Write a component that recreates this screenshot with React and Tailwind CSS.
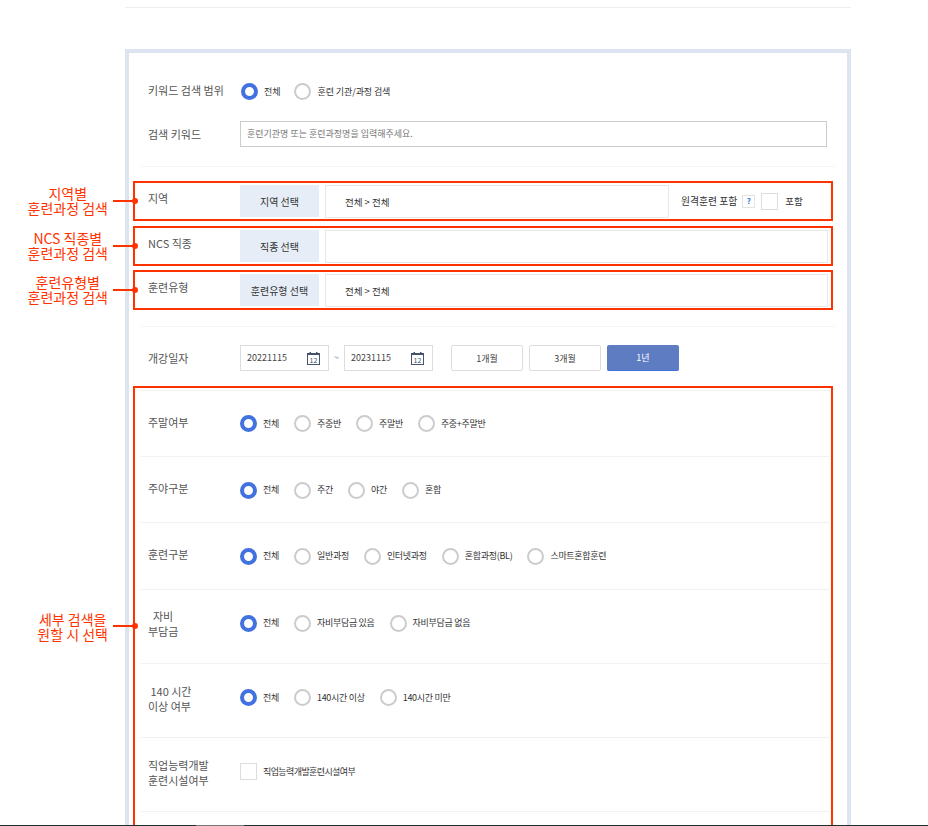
import React from 'react'

const Radio = ({ checked }) => (
  <span className={checked
    ? 'block w-[17px] h-[17px] shrink-0 rounded-full border-4 border-[#4272e0] bg-white'
    : 'block w-[17px] h-[17px] shrink-0 rounded-full border-2 border-[#cccccc] bg-white'} />
)

const RadioGroup = ({ items, className }) => (
  <div className={'flex items-center gap-[15px] ' + (className || '')}>
    {items.map((item, i) => (
      <div key={item} className="flex items-center gap-[6px]">
        <Radio checked={i === 0} />
        <span className="text-[9px] tracking-[-0.3px] text-[#333333] whitespace-nowrap">{item}</span>
      </div>
    ))}
  </div>
)

const CalendarIcon = () => (
  <svg width="13" height="13" viewBox="0 0 13 13" className="shrink-0">
    <rect x="0.5" y="1.5" width="12" height="11" fill="none" stroke="#44546a" />
    <rect x="0" y="1" width="13" height="2" fill="#44546a" />
    <rect x="2.5" y="0" width="1.5" height="2" fill="#44546a" />
    <rect x="9" y="0" width="1.5" height="2" fill="#44546a" />
    <text x="6.5" y="10.5" textAnchor="middle" fontSize="7" fill="#44546a">12</text>
  </svg>
)

const DateBox = ({ value }) => (
  <div className="flex items-center justify-between w-[89px] h-[26px] border border-[#dddddd] pl-[6px] pr-2 text-[9px] text-[#444444]">
    {value}
    <CalendarIcon />
  </div>
)

const Callout = ({ lines, className, textClass }) => (
  <div className={'absolute right-full flex items-center ' + className}>
    <div className={'text-[14px] leading-[15px] text-[#ff3300] text-center whitespace-nowrap mr-[5px] ' + (textClass || '')}>
      {lines.map((l) => <div key={l}>{l}</div>)}
    </div>
    <div className="relative w-[22px] h-[2px] bg-[#ff3300]">
      <span className="absolute right-[-3px] top-[-2px] w-[6px] h-[6px] rounded-full bg-[#ff3300]" />
    </div>
  </div>
)

const PickRow = ({ label, button, value, lines, wide, className, children }) => (
  <div className={'relative flex items-center h-10 ml-1 mr-[14px] border-2 border-[#ff3300] ' + className}>
    <div className="w-[105px] shrink-0 pl-[13px] -mt-[5px] text-[11px] text-[#555555]">{label}</div>
    <div className="flex items-center justify-center w-[79px] h-[32px] pt-px shrink-0 bg-[#e6edf7] text-[10px] text-[#333333]">{button}</div>
    <div className={'flex items-center h-[33px] ml-[6px] pl-[19px] pt-[3px] border border-[#e8e8e8] text-[9.5px] text-[#333333] ' + (wide ? 'w-[503px]' : 'w-[344px]')}>{value}</div>
    {children}
    <Callout lines={lines} className="top-1/2 -translate-y-1/2" />
  </div>
)

const DetailRow = ({ label, height, labelClass, children }) => (
  <div className={'flex items-center ml-[6px] mr-[2px] pl-[7px] border-b border-[#f2f2f2] ' + height}>
    <div className={'w-[92px] shrink-0 text-[11px] leading-[15.5px] text-[#555555] whitespace-pre ' + labelClass}>{label}</div>
    {children}
  </div>
)

const App = () => {
  return (
    <div className="relative h-[826px] overflow-hidden bg-white font-['Noto_Sans_CJK_KR','Noto_Sans',sans-serif]">
      <div className="w-[726px] ml-[125px]">
        <div className="h-2 border-b border-[#eeeeee]" />
        <div className="mt-[41px] border-4 border-[#dde3ef] pb-10">
          <div className="flex items-center h-[17px] mt-[30px] ml-3 pl-[7px]">
            <div className="w-[93px] text-[11px] text-[#555555] -mt-[3px]">키워드 검색 범위</div>
            <div className="flex items-center gap-[13px]">
              <div className="flex items-center gap-[6px]">
                <Radio checked />
                <span className="text-[9px] text-[#333333] pt-px">전체</span>
              </div>
              <div className="flex items-center gap-[7px]">
                <Radio />
                <span className="text-[9px] tracking-[-0.1px] text-[#333333] pt-px">훈련 기관/과정 검색</span>
              </div>
            </div>
          </div>
          <div className="flex items-center mt-[21px] ml-3 pl-[7px]">
            <div className="w-[92px] text-[11px] text-[#555555]">검색 키워드</div>
            <div className="flex items-center w-[587px] h-[26px] pl-[6px] border border-[#cccccc] text-[9px] text-[#777777]">
              훈련기관명 또는 훈련과정명을 입력해주세요.
            </div>
          </div>
          <div className="h-px mx-3 mt-[19px] bg-[#f4f4f4]" />

          <PickRow label="지역" button="지역 선택" value="전체 > 전체" lines={['지역별', '훈련과정 검색']} className="mt-[14px]">
            <span className="ml-3 text-[9.8px] text-[#333333] whitespace-nowrap">원격훈련 포함</span>
            <span className="flex items-center justify-center w-[13px] h-[13px] ml-[5px] border border-[#e3e3e3] text-[8px] font-bold text-[#4272e0]">?</span>
            <span className="block w-[17px] h-[17px] ml-[6px] border border-[#dddddd]" />
            <span className="ml-[7px] text-[9.5px] text-[#333333]">포함</span>
          </PickRow>
          <PickRow label="NCS 직종" button="직종 선택" value="" wide lines={['NCS 직종별', '훈련과정 검색']} className="mt-[5px]" />
          <PickRow label="훈련유형" button="훈련유형 선택" value="전체 > 전체" wide lines={['훈련유형별', '훈련과정 검색']} className="mt-1" />

          <div className="h-px mx-3 mt-4 bg-[#f4f4f4]" />
          <div className="flex items-center mt-[18px] ml-3 pl-[7px]">
            <div className="w-[92px] text-[11px] text-[#555555]">개강일자</div>
            <DateBox value="20221115" />
            <span className="w-[15px] text-center text-[9px] text-[#777777]">~</span>
            <DateBox value="20231115" />
            <div className="flex items-center gap-[6px] ml-[18px] text-[9px]">
              <div className="flex items-center justify-center w-[72px] h-[26px] pt-px rounded-[2px] border border-[#dddddd] text-[#444444]">1개월</div>
              <div className="flex items-center justify-center w-[72px] h-[26px] pt-px rounded-[2px] border border-[#dddddd] text-[#444444]">3개월</div>
              <div className="flex items-center justify-center w-[72px] h-[26px] pt-px rounded-[2px] bg-[#5d7cc2] border-b border-[#4272e0] text-white">1년</div>
            </div>
          </div>

          <div className="relative mt-[15px] ml-1 mr-[14px] border-2 border-[#ff3300] pt-[2px]">
            <Callout lines={['세부 검색을', '원할 시 선택']} className="top-[221px]" textClass="mt-[3px]" />
            <div className="h-px ml-[6px] mr-[2px] bg-[#f2f2f2]" />
            <DetailRow label="주말여부" height="h-[66px]" labelClass="-mt-px">
              <RadioGroup items={['전체', '주중반', '주말반', '주중+주말반']} />
            </DetailRow>
            <DetailRow label="주야구분" height="h-[66px]" labelClass="-mt-px">
              <RadioGroup items={['전체', '주간', '야간', '혼합']} className="mt-px" />
            </DetailRow>
            <DetailRow label="훈련구분" height="h-[67px]" labelClass="-mt-[2px]">
              <RadioGroup items={['전체', '일반과정', '인터넷과정', '혼합과정(BL)', '스마트혼합훈련']} />
            </DetailRow>
            <DetailRow label={'\u00a0\u00a0자비\n부담금'} height="h-[74px]" labelClass="-mt-[5px]">
              <RadioGroup items={['전체', '자비부담금 있음', '자비부담금 없음']} className="-mt-[7px]" />
            </DetailRow>
            <DetailRow label={'\u00a0140 시간\n이상 여부'} height="h-[74px]" labelClass="-mt-[3px]">
              <RadioGroup items={['전체', '140시간 이상', '140시간 미만']} className="-mt-[6px]" />
            </DetailRow>
            <DetailRow label={'직업능력개발\n훈련시설여부'} height="h-[74px]" labelClass="-mt-[3px]">
              <div className="flex items-center gap-[6px] -mt-[6px]">
                <span className="block w-[17px] h-[17px] border border-[#dddddd]" />
                <span className="text-[9px] tracking-[-0.6px] text-[#333333]">직업능력개발훈련시설여부</span>
              </div>
            </DetailRow>
            <div className="h-[74px]" />
          </div>
        </div>
      </div>
      <div className="absolute left-0 right-0 bottom-0 h-px bg-[#1f2d30]">
        <div className="w-12 h-px ml-[196px] bg-[#777777]" />
      </div>
    </div>
  )
}

export default App
